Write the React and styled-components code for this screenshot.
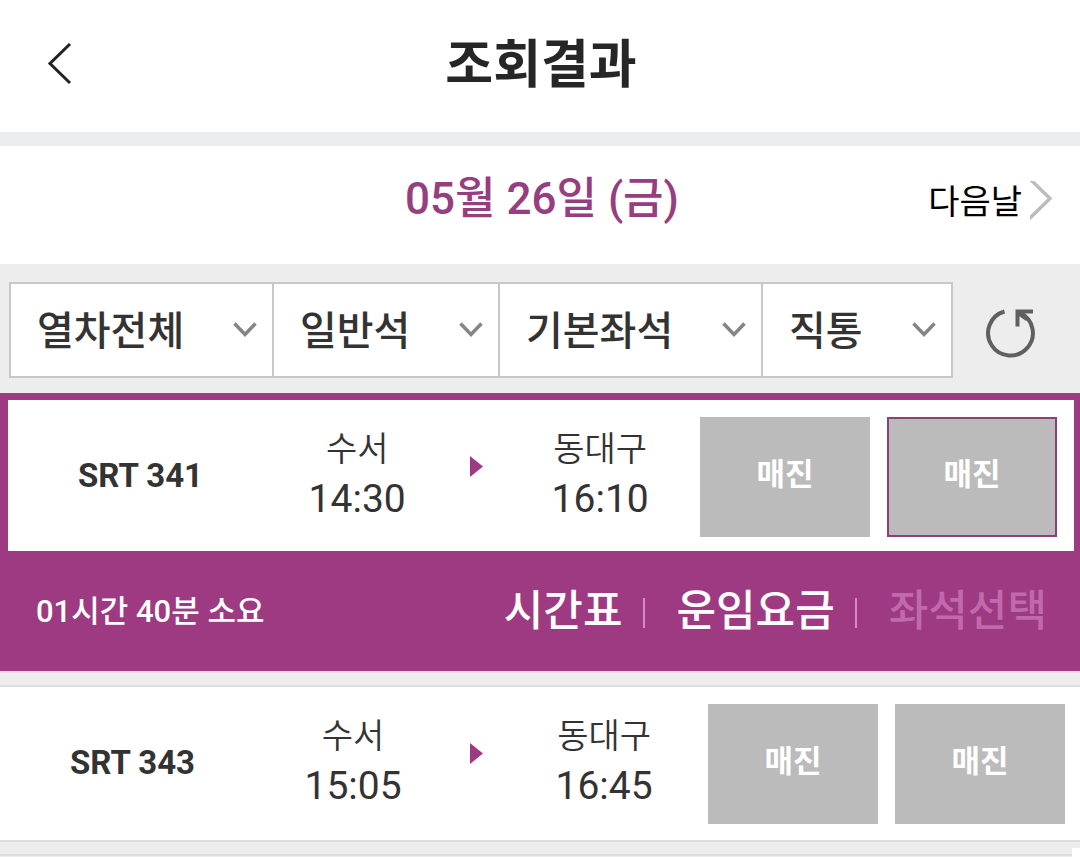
import React from "react";
import styled, { createGlobalStyle } from "styled-components";

const purple = "#9d3a82";

const GlobalStyle = createGlobalStyle`
  *, *::before, *::after { box-sizing: border-box; }
  body {
    margin: 0;
    background: #ededed;
    color: #333;
    font-family: Roboto, "Noto Sans CJK KR", sans-serif;
  }
  button, select { font: inherit; color: inherit; }
  button { padding: 0; border: 0; background: none; cursor: pointer; }
  h1, h2, p, ul { margin: 0; padding: 0; }
  ul { list-style: none; }
  svg { display: block; }
`;

const Page = styled.div`
  overflow: hidden;
`;

const Header = styled.header`
  display: grid;
  grid-template-columns: 1fr auto 1fr;
  align-items: center;
  height: 132px;
  padding: 0 44px 2px 46px;
  background: #fff;
`;

const BackButton = styled.button`
  justify-self: start;
`;

const Title = styled.h1`
  padding-top: 2px;
  font-size: 52px;
  line-height: 72px;
  font-weight: 700;
  color: #262626;
`;

const DateBar = styled.section`
  display: grid;
  grid-template-columns: 1fr auto 1fr;
  align-items: center;
  height: 132px;
  padding: 0 26px 12px 30px;
  border-top: 14px solid #ecedee;
  background: #fff;
`;

const DateTitle = styled.h2`
  grid-column: 2;
  font-size: 44px;
  line-height: 64px;
  font-weight: 500;
  color: #953e80;
`;

const NextDay = styled.button`
  display: flex;
  align-items: center;
  justify-self: end;
  gap: 8px;
  padding-top: 6px;
  font-size: 34px;
  line-height: 52px;
  color: #000;

  svg { margin-bottom: 4px; }
`;

const FilterBar = styled.form`
  display: flex;
  padding: 18px 13px 15px 9px;
  background: #ededed;
`;

const Filters = styled.div`
  display: flex;
  flex: 1;
  min-width: 0;
  height: 96px;
  border: 2px solid #c8c8c8;
  background: #fff;
`;

const FilterBox = styled.label`
  position: relative;
  flex: ${(p) => p.$share} 1 0;
  min-width: 0;

  & + & { border-left: 2px solid #c8c8c8; }

  svg {
    position: absolute;
    right: 15px;
    top: 50%;
    margin-top: -8px;
    pointer-events: none;
  }
`;

const Select = styled.select`
  appearance: none;
  width: 100%;
  height: 100%;
  padding: 2px 40px 0 26px;
  border: 0;
  background: transparent;
  font-size: 40px;
  font-weight: 500;
  cursor: pointer;
`;

const RefreshButton = styled.button`
  display: grid;
  place-items: center;
  width: 114px;
  padding-top: 4px;

  svg { overflow: visible; }
`;

const Train = styled.li`
  background: #fff;
  margin-bottom: 12px;
  border-top: ${(p) => (p.$selected ? `7px solid ${purple}` : "2px solid #dcdcdc")};
  border-bottom: 2px solid ${(p) => (p.$selected ? "#ecd8e6" : "#dcdcdc")};
`;

const TrainRow = styled.div`
  display: grid;
  grid-template-columns: 265px 23fr 71px 24fr auto;
  align-items: center;
  padding: ${(p) => (p.$selected ? "17px 17px 14px 0" : "17px 15px 16px 0")};
  border: solid ${purple};
  border-width: ${(p) => (p.$selected ? "0 6px 0 8px" : "0")};
`;

const TrainName = styled.p`
  margin-bottom: 2px;
  text-align: center;
  font-size: 33px;
  line-height: 48px;
  font-weight: 700;
`;

const Stop = styled.div`
  margin-bottom: 6px;
  text-align: center;
  line-height: 50px;
`;

const Station = styled.p`
  font-size: 34px;
  font-weight: 350;
`;

const Time = styled.time`
  display: block;
  font-size: 39px;
`;

const Arrow = styled.svg`
  justify-self: center;
  margin-bottom: 22px;
`;

const Seats = styled.div`
  display: flex;
  gap: 17px;
  padding-left: 12px;
`;

const SeatButton = styled.button`
  width: 170px;
  height: 120px;
  padding-bottom: 12px;
  border: 2px solid ${(p) => (p.$active ? "#8c3f78" : "#bbb")};
  background: #bbb;
  color: #fff;
  font-size: 31px;
  font-weight: 700;
`;

const Detail = styled.div`
  display: flex;
  align-items: center;
  justify-content: space-between;
  height: 120px;
  padding: 0 33px 0 36px;
  background: ${purple};
  color: #fff;
`;

const Duration = styled.p`
  padding-top: 2px;
  font-size: 31px;
  line-height: 44px;
  font-weight: 500;
`;

const Actions = styled.div`
  display: flex;
  align-items: center;
`;

const Action = styled.button`
  font-size: 43px;
  line-height: 60px;
  font-weight: 500;

  &:disabled { color: #c06aab; cursor: default; }

  & + &::before {
    content: "";
    display: inline-block;
    width: 2px;
    height: 30px;
    margin: 0 32px 0 20px;
    vertical-align: -2px;
    background: #d48cc4;
  }
`;

const ListEnd = styled.div`
  height: 3px;
  border-top: 2px solid #dcdcdc;
`;

const FloatingPanelEdge = styled.div`
  position: fixed;
  right: 0;
  bottom: 0;
  width: 8px;
  height: 9px;
  background: #fff;
`;

const filters = [
  { label: "열차 종류", value: "열차전체", share: 261 },
  { label: "객실 등급", value: "일반석", share: 224 },
  { label: "좌석 종류", value: "기본좌석", share: 261 },
  { label: "여정 경로", value: "직통", share: 188 },
];

const trains = [
  { name: "SRT 341", from: "수서", depart: "14:30", to: "동대구", arrive: "16:10", duration: "01시간 40분 소요", selected: true },
  { name: "SRT 343", from: "수서", depart: "15:05", to: "동대구", arrive: "16:45" },
];

function TrainItem({ train }) {
  const { selected } = train;
  return (
    <Train $selected={selected}>
      <TrainRow $selected={selected}>
        <TrainName>{train.name}</TrainName>
        <Stop>
          <Station>{train.from}</Station>
          <Time>{train.depart}</Time>
        </Stop>
        <Arrow width="13" height="21" viewBox="0 0 13 21" aria-hidden="true">
          <path d="M0 0L13 10.5L0 21Z" fill={purple} />
        </Arrow>
        <Stop>
          <Station>{train.to}</Station>
          <Time>{train.arrive}</Time>
        </Stop>
        <Seats>
          <SeatButton type="button">매진</SeatButton>
          <SeatButton type="button" $active={selected}>매진</SeatButton>
        </Seats>
      </TrainRow>
      {selected && (
        <Detail>
          <Duration>{train.duration}</Duration>
          <Actions>
            <Action type="button">시간표</Action>
            <Action type="button">운임요금</Action>
            <Action type="button" disabled>좌석선택</Action>
          </Actions>
        </Detail>
      )}
    </Train>
  );
}

export default function App() {
  return (
    <Page>
      <GlobalStyle />
      <Header>
        <BackButton type="button" aria-label="뒤로">
          <svg width="26" height="44" viewBox="0 0 26 44" fill="none" stroke="#222" strokeWidth="3">
            <path d="M24 1L4 20.500L24 40" />
          </svg>
        </BackButton>
        <Title>조회결과</Title>
      </Header>
      <DateBar>
        <DateTitle>05월 26일 (금)</DateTitle>
        <NextDay type="button">
          다음날
          <svg width="24" height="39" viewBox="0 0 24 39" fill="none" stroke="#bdbdbd" strokeWidth="3.5">
            <path d="M-2 -4L20 17.500L-2 39" />
          </svg>
        </NextDay>
      </DateBar>
      <FilterBar>
        <Filters>
          {filters.map((f) => (
            <FilterBox key={f.label} $share={f.share}>
              <Select aria-label={f.label} defaultValue={f.value}>
                <option>{f.value}</option>
              </Select>
              <svg width="24" height="16" viewBox="0 0 24 16" fill="none" stroke="#858585" strokeWidth="3.5">
                <path d="M1.500 1.500L12 12.500L22.500 1.500" />
              </svg>
            </FilterBox>
          ))}
        </Filters>
        <RefreshButton type="button" aria-label="새로고침">
          <svg width="50" height="50" viewBox="0 0 50 50" fill="none" stroke="#606060" strokeWidth="4">
            <path d="M19.500 4.500A22.400 22.400 0 1 0 35 5.800" />
            <path d="M32.500 19.500V4.500H48" />
            <path d="M33 5H37L44 11L41 14L34 9Z" fill="#606060" stroke="none" />
          </svg>
        </RefreshButton>
      </FilterBar>
      <ul>
        {trains.map((t) => (
          <TrainItem key={t.name} train={t} />
        ))}
      </ul>
      <ListEnd />
      <FloatingPanelEdge />
    </Page>
  );
}
